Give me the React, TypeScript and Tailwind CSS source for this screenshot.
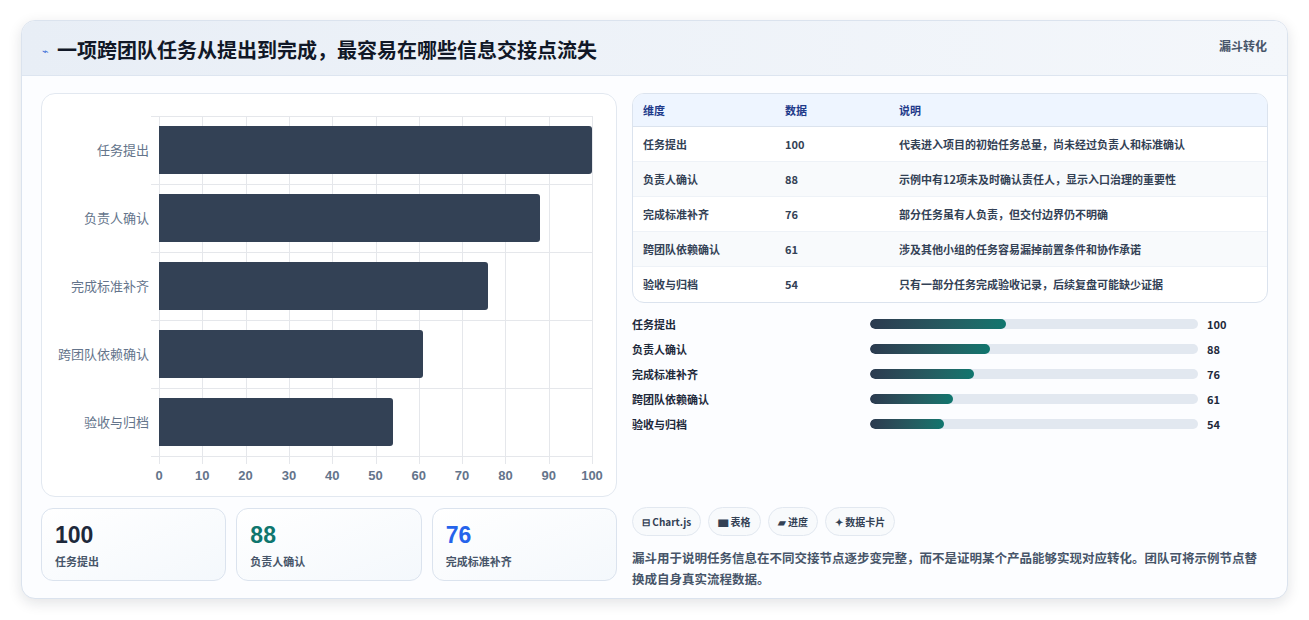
const F = { fontFamily: '"Noto Sans CJK SC", "Noto Sans", sans-serif' };
const data = [
  { n: "任务提出", v: 100, d: "代表进入项目的初始任务总量，尚未经过负责人和标准确认" },
  { n: "负责人确认", v: 88, d: "示例中有12项未及时确认责任人，显示入口治理的重要性" },
  { n: "完成标准补齐", v: 76, d: "部分任务虽有人负责，但交付边界仍不明确" },
  { n: "跨团队依赖确认", v: 61, d: "涉及其他小组的任务容易漏掉前置条件和协作承诺" },
  { n: "验收与归档", v: 54, d: "只有一部分任务完成验收记录，后续复盘可能缺少证据" },
];
const ticks = [0, 10, 20, 30, 40, 50, 60, 70, 80, 90, 100];

export default function App() {
  return (
    <div style={F} className="w-[1309px] h-[620px] bg-white pt-[20px] pl-[21px]">
      <div className="w-[1267px] h-[579px] rounded-[14px] border border-[#dbe3ee] bg-[#fcfdff] shadow-[0_4px_14px_rgba(15,23,42,0.12)] overflow-hidden">
        <div className="h-[55px] bg-gradient-to-r from-[#e8eef6] to-[#f4f7fb] border-b border-[#dde5f0] flex items-start justify-between px-[20px]">
          <div className="flex items-center gap-[8px] mt-[15px]">
            <span className="text-[#3b6fd8] text-[11px]">⌁</span>
            <span className="text-[20px] font-bold text-[#111827] leading-[28px]">一项跨团队任务从提出到完成，最容易在哪些信息交接点流失</span>
          </div>
          <span className="mt-[16px] text-[12px] font-bold text-[#475569]">漏斗转化</span>
        </div>
        <div className="flex gap-[15px] px-[19px] pt-[17px]">
          <div className="w-[577px] flex flex-col gap-[11px]">
            <div className="h-[404px] rounded-[14px] border border-[#e2e8f0] bg-white relative">
              <div className="absolute left-[117px] top-[22px] w-[433px] h-[340px]">
                {ticks.map((t) => (
                  <div key={t} className="absolute top-0 h-[348px] w-px bg-[#e5e7eb]" style={{ left: `${t}%` }} />
                ))}
                {[0, 1, 2, 3, 4, 5].map((i) => (
                  <div key={i} className="absolute left-[-8px] right-0 h-px bg-[#e5e7eb]" style={{ top: i * 68 }} />
                ))}
                {data.map((d, i) => (
                  <div key={d.n} className="absolute left-0 h-[48px] bg-[#334155] rounded-r-[3px]" style={{ top: i * 68 + 10, width: `${d.v}%` }} />
                ))}
                {data.map((d, i) => (
                  <div key={d.n + "l"} className="absolute right-[443px] text-[13px] text-[#64748b] whitespace-nowrap leading-[18px]" style={{ top: i * 68 + 25 }}>{d.n}</div>
                ))}
                {ticks.map((t) => (
                  <div key={t + "t"} className="absolute top-[350px] -translate-x-1/2 text-[13px] font-bold text-[#64748b]" style={{ left: `${t}%`, fontFamily: '"Liberation Sans", sans-serif' }}>{t}</div>
                ))}
              </div>
            </div>
            <div className="flex gap-[10px]">
              {[
                ["100", "任务提出", "text-[#1e293b]"],
                ["88", "负责人确认", "text-[#0f766e]"],
                ["76", "完成标准补齐", "text-[#2563eb]"],
              ].map(([v, l, c]) => (
                <div key={l} className="flex-1 h-[73px] rounded-[12px] border border-[#dbe3ee] bg-gradient-to-br from-white to-[#f4f8fc] px-[13px] pt-[10px]">
                  <div className={`text-[23px] font-bold leading-[32px] ${c}`} style={{ fontFamily: '"Liberation Sans", sans-serif' }}>{v}</div>
                  <div className="text-[11px] font-bold text-[#475569] mt-[2px]">{l}</div>
                </div>
              ))}
            </div>
          </div>
          <div className="w-[637px] flex flex-col">
            <div className="rounded-[12px] border border-[#dbe3ee] overflow-hidden bg-white">
              <div className="flex h-[33px] items-center bg-[#eef5ff] border-b border-[#dbe3ee] text-[11px] font-bold text-[#1e3a8a]">
                <div className="w-[152px] pl-[10px]">维度</div>
                <div className="w-[114px]">数据</div>
                <div>说明</div>
              </div>
              {data.map((d, i) => (
                <div key={d.n} className={`flex h-[35px] items-center text-[11px] font-bold text-[#334155] ${i < 4 ? "border-b border-[#eef2f7]" : ""} ${i % 2 ? "bg-[#f8fafc]" : ""}`}>
                  <div className="w-[152px] pl-[10px]">{d.n}</div>
                  <div className="w-[114px]">{d.v}</div>
                  <div>{d.d}</div>
                </div>
              ))}
            </div>
            <div className="mt-[12px] flex flex-col gap-[7px]">
              {data.map((d) => (
                <div key={d.n} className="flex items-center h-[18px] text-[11px] font-bold text-[#1e293b]">
                  <div className="w-[238px]">{d.n}</div>
                  <div className="w-[328px] h-[10px] rounded-full bg-[#e2e8f0] overflow-hidden">
                    <div className="h-full rounded-full bg-gradient-to-r from-[#2b3a4f] to-[#0f766e]" style={{ width: `${d.v * 0.416}%` }} />
                  </div>
                  <div className="ml-[9px]">{d.v}</div>
                </div>
              ))}
            </div>
            <div className="mt-[74px] flex gap-[7px]">
              {["⊟ Chart.js", "▆ 表格", "▰ 进度", "✦ 数据卡片"].map((c) => (
                <div key={c} className="h-[29px] px-[9px] rounded-full border border-[#e2e8f0] bg-[#f8fafc] text-[10px] font-bold text-[#334155] flex items-center">{c}</div>
              ))}
            </div>
            <p className="mt-[11px] text-[12.5px] font-bold text-[#475569] leading-[21px]">漏斗用于说明任务信息在不同交接节点逐步变完整，而不是证明某个产品能够实现对应转化。团队可将示例节点替换成自身真实流程数据。</p>
          </div>
        </div>
      </div>
    </div>
  );
}
